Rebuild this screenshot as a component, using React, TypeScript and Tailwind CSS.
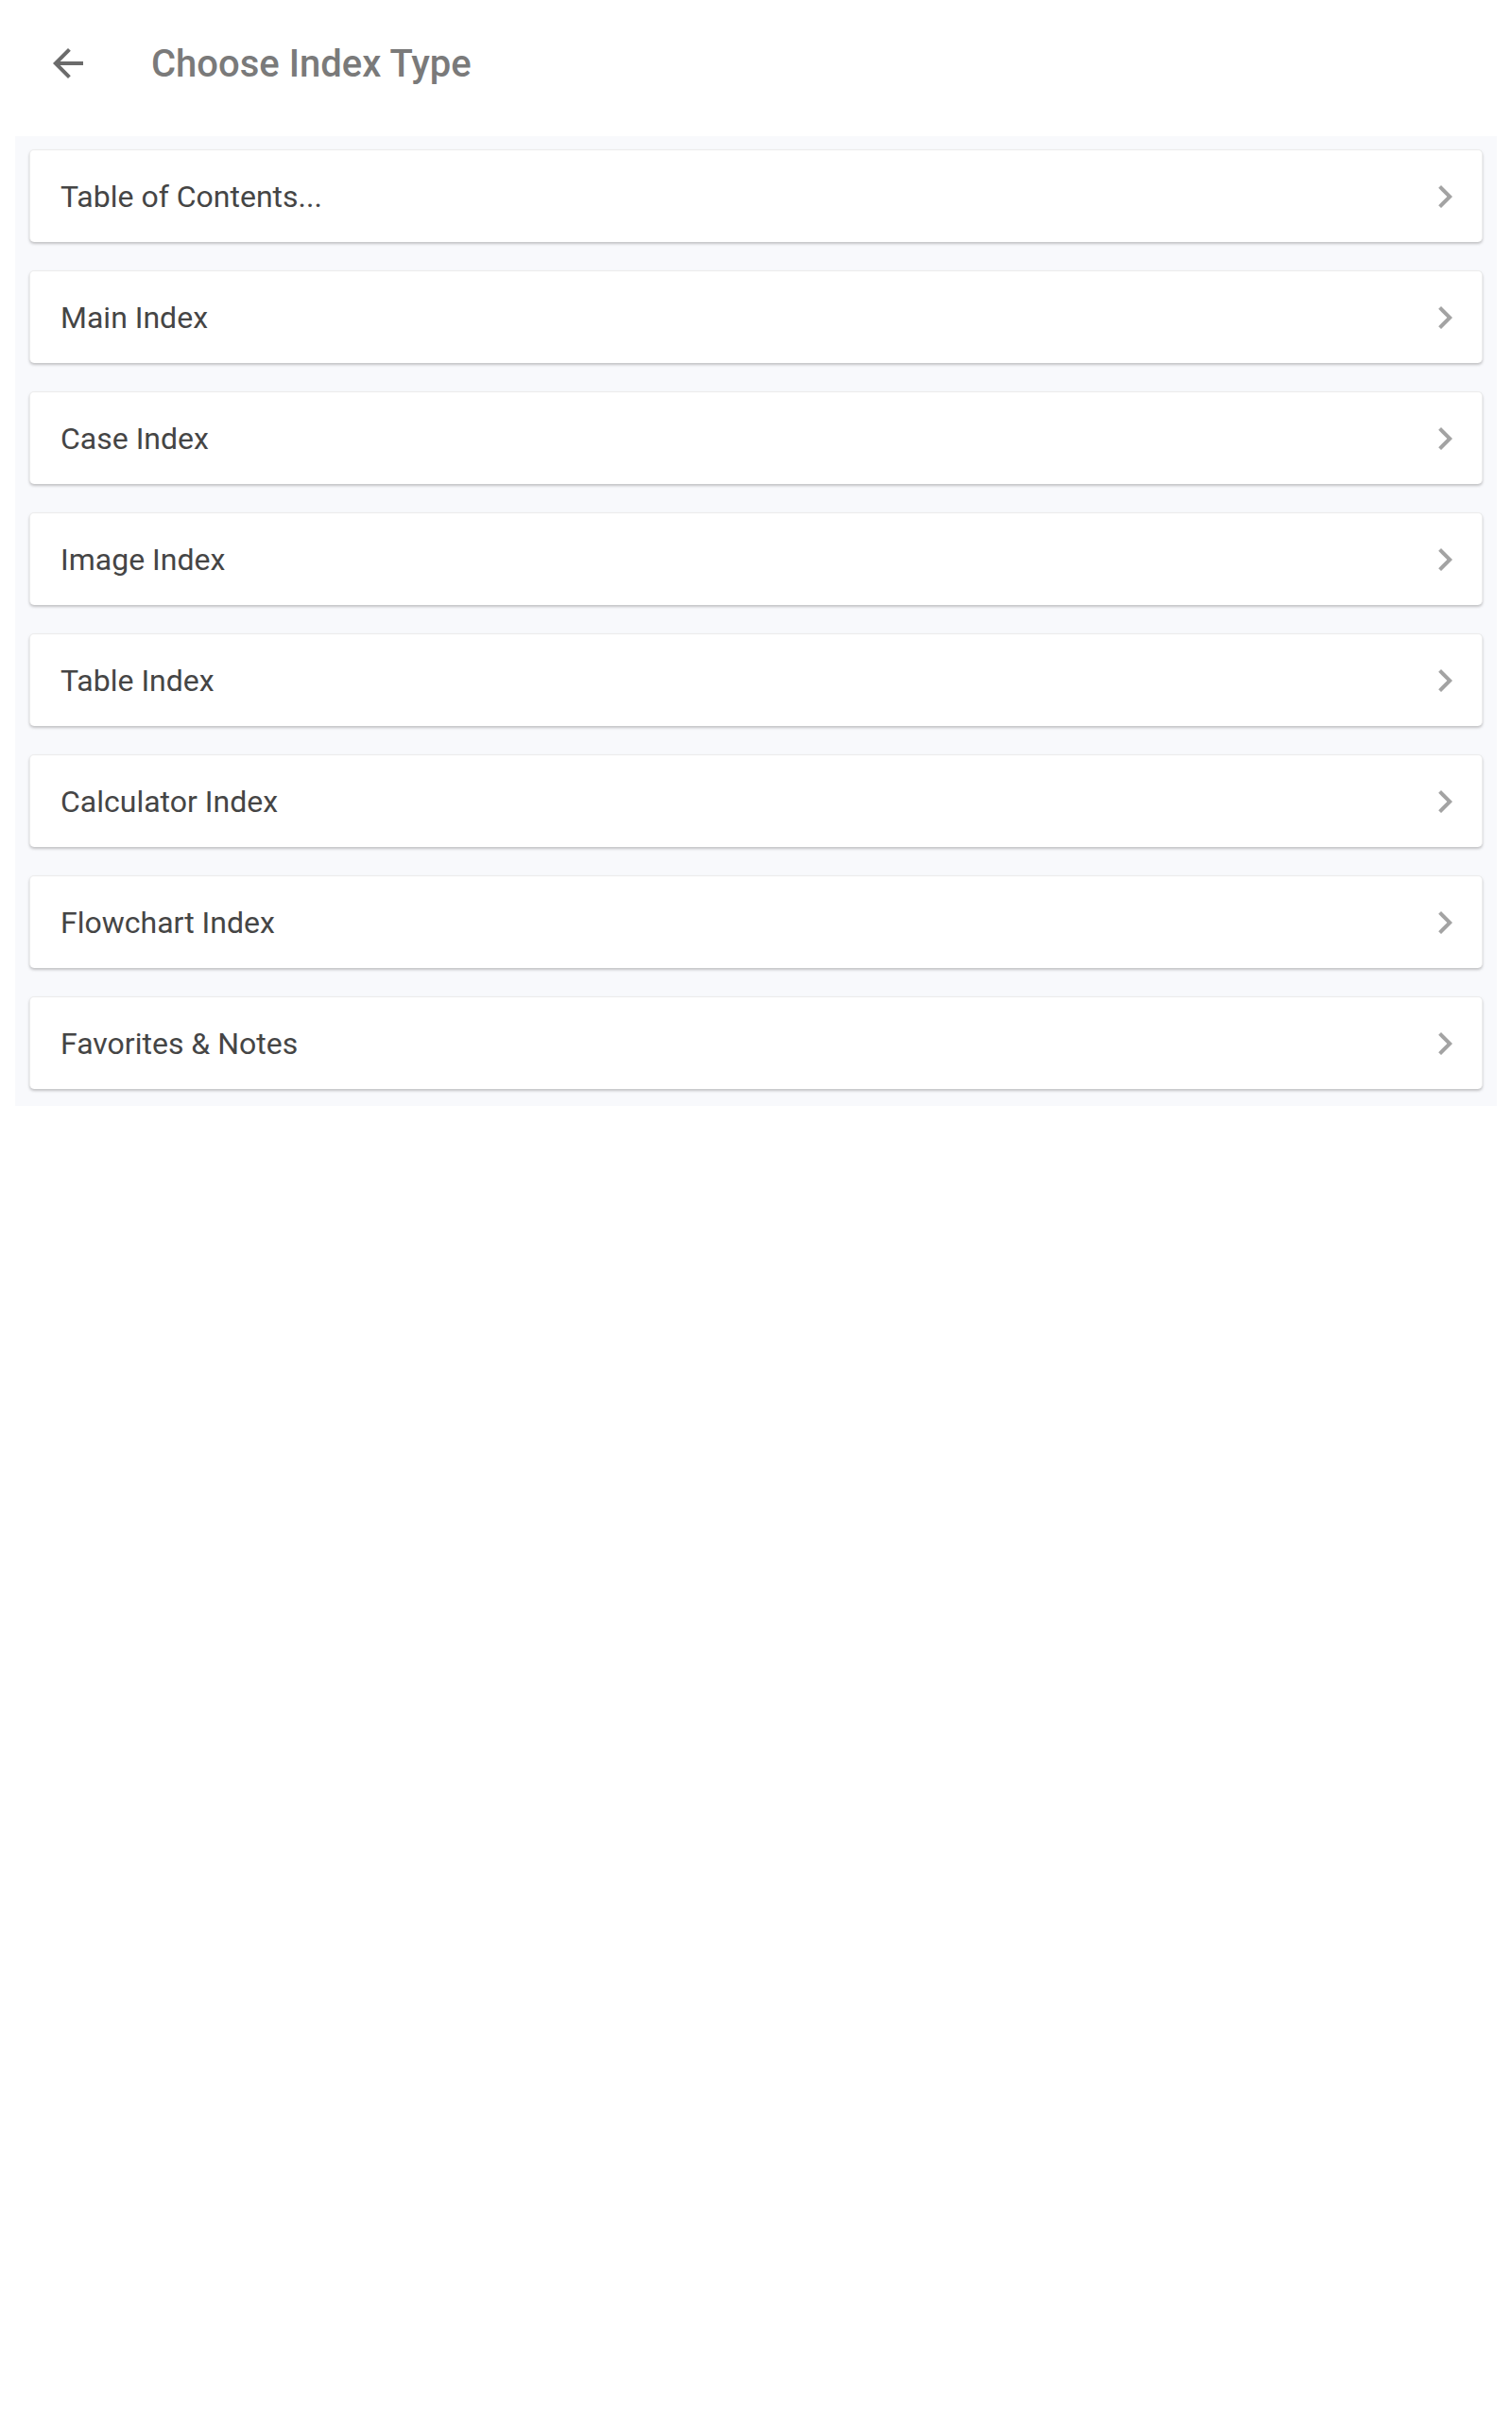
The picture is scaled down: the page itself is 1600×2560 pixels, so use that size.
import React from "react";

const items = [
  "Table of Contents...",
  "Main Index",
  "Case Index",
  "Image Index",
  "Table Index",
  "Calculator Index",
  "Flowchart Index",
  "Favorites & Notes",
];

function ArrowBack() {
  return (
    <svg viewBox="0 0 24 24" className="h-12 w-12" fill="#6b6b6b">
      <path d="M20 11H7.83l5.59-5.59L12 4l-8 8 8 8 1.41-1.41L7.83 13H20v-2z" />
    </svg>
  );
}

function Chevron() {
  return (
    <svg viewBox="0 0 24 24" className="h-12 w-12" fill="#a3a3a3">
      <path d="M10 6L8.59 7.41 13.17 12l-4.58 4.59L10 18l6-6z" />
    </svg>
  );
}

export default function App() {
  return (
    <div className="min-h-[2560px] w-[1600px] bg-white font-['Roboto','Liberation_Sans',sans-serif]">
      <header className="flex h-[144px] items-start">
        <button className="ml-[48px] mt-[43px]">
          <ArrowBack />
        </button>
        <h1 className="ml-[64px] mt-[44px] text-[40px] font-medium leading-[48px] text-[#7a7a7a]">
          Choose Index Type
        </h1>
      </header>
      <div className="mx-4 flex flex-col gap-[30px] bg-[#f8f9fc] px-[15px] pb-[18px] pt-[14px]">
        {items.map((label) => (
          <div
            key={label}
            className="flex h-[98px] items-center justify-between rounded-[5px] border border-[#ececec] border-b-0 bg-white pl-[32px] pr-[15px] shadow-[0_2px_3px_rgba(0,0,0,0.22)]"
          >
            <span className="text-[32px] leading-none text-[#454545]">{label}</span>
            <Chevron />
          </div>
        ))}
      </div>
    </div>
  );
}
